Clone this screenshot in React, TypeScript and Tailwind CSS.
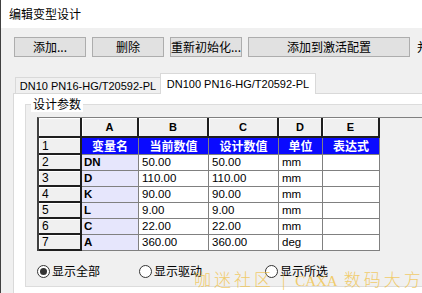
import React from "react";

const cjk = { fontFamily: '"Noto Sans CJK SC", "Liberation Sans", sans-serif' };
const latin = { fontFamily: '"Liberation Sans", "Noto Sans CJK SC", sans-serif' };

const rows = [
  { n: "2", name: "DN", cur: "50.00", des: "50.00", unit: "mm" },
  { n: "3", name: "D", cur: "110.00", des: "110.00", unit: "mm" },
  { n: "4", name: "K", cur: "90.00", des: "90.00", unit: "mm" },
  { n: "5", name: "L", cur: "9.00", des: "9.00", unit: "mm" },
  { n: "6", name: "C", cur: "22.00", des: "22.00", unit: "mm" },
  { n: "7", name: "A", cur: "360.00", des: "360.00", unit: "deg" },
];

const headCell =
  "flex items-center bg-[#f0f0f0] border-r-2 border-b-2 border-[#1e1e1e] shadow-[inset_1px_1px_0_#ffffff]";
const dataCell = "flex items-center bg-white border-r border-b border-[#808080] pl-[3px] text-[11.5px] text-black";

function Radio({ label, checked }: { label: string; checked?: boolean }) {
  return (
    <div className="flex items-center gap-[2px]">
      <span className="flex h-[13px] w-[13px] items-center justify-center rounded-full border border-[#333] bg-white">
        {checked && <span className="h-[7px] w-[7px] rounded-full bg-[#333]" />}
      </span>
      <span className="text-[12px] text-black" style={cjk}>
        {label}
      </span>
    </div>
  );
}

export default function App() {
  return (
    <div className="relative flex h-[293px] w-[422px] flex-col overflow-hidden border-l border-[#404040] bg-[#f0f0f0]">
      {/* title */}
      <div className="flex h-[28px] shrink-0 items-center bg-white pl-[8px] text-[12px] text-black" style={cjk}>
        编辑变型设计
      </div>

      {/* toolbar buttons */}
      <div className="mt-[9px] flex h-[20px] shrink-0 gap-[6px] pl-[13px] text-[12px] text-black" style={cjk}>
        <button className="w-[72px] shrink-0 border border-[#adadad] bg-[#e1e1e1]">添加...</button>
        <button className="w-[72px] shrink-0 border border-[#adadad] bg-[#e1e1e1]">删除</button>
        <button className="w-[72px] shrink-0 border border-[#adadad] bg-[#e1e1e1]">重新初始化...</button>
        <button className="w-[162px] shrink-0 border border-[#adadad] bg-[#e1e1e1]">添加到激活配置</button>
        <span className="shrink-0 pl-[1px] leading-[20px]">并</span>
      </div>

      {/* tabs */}
      <div className="mt-[16px] flex h-[20px] shrink-0 items-end pl-[14px] text-[11px] text-black" style={latin}>
        <div className="flex h-[16px] w-[145px] shrink-0 items-center justify-center border-t border-l border-[#d9d9d9] bg-[#f0f0f0] pt-[1px]">
          DN10 PN16-HG/T20592-PL
        </div>
        <div className="relative z-10 -mb-px flex h-[21px] w-[156px] shrink-0 items-start justify-center border border-b-0 border-[#d9d9d9] bg-white pt-[2px]">
          DN100 PN16-HG/T20592-PL
        </div>
      </div>

      {/* tab page */}
      <div className="ml-[12px] flex-1 border-t border-l border-[#d9d9d9] bg-white pl-[11px] pt-[10px]">
        <div className="relative h-[183px] w-[420px] border-t border-l border-b border-[#dcdcdc] bg-[#f0f0f0] pl-[11px] pt-[12px]">
          <span className="absolute -top-[9px] left-[5px] bg-white px-[2px] text-[12px] leading-[16px] text-black" style={cjk}>
            设计参数
          </span>

          {/* grid control */}
          <div className="h-[134px] border-t border-l-2 border-t-[#808080] border-l-[#404040] bg-[#f0f0f0]">
            <div className="grid w-max grid-cols-[43px_57px_70px_70px_44px_57px] grid-rows-[20px_17px_repeat(6,16px)]">
              <div className={headCell} />
              {["A", "B", "C", "D", "E"].map((c) => (
                <div key={c} className={`${headCell} justify-center text-[11px] font-bold text-black`} style={latin}>
                  {c}
                </div>
              ))}

              <div className={`${headCell} pl-[3px] text-[12px] text-black`} style={latin}>
                1
              </div>
              {["变量名", "当前数值", "设计数值", "单位", "表达式"].map((t) => (
                <div
                  key={t}
                  className="flex items-center justify-center border-r border-b border-[#808080] bg-[#0a0aff] text-[12px] font-bold text-white"
                  style={cjk}
                >
                  {t}
                </div>
              ))}

              {rows.map((r) => (
                <React.Fragment key={r.n}>
                  <div className={`${headCell} pl-[3px] text-[12px] text-black`} style={latin}>
                    {r.n}
                  </div>
                  <div
                    className="flex items-center border-r border-b border-[#808080] bg-[#e6e6fc] pl-[2px] text-[11.5px] font-bold text-black"
                    style={latin}
                  >
                    {r.name}
                  </div>
                  <div className={dataCell} style={latin}>
                    {r.cur}
                  </div>
                  <div className={dataCell} style={latin}>
                    {r.des}
                  </div>
                  <div className={dataCell} style={latin}>
                    {r.unit}
                  </div>
                  <div className={dataCell} />
                </React.Fragment>
              ))}
            </div>
          </div>

          {/* radios */}
          <div className="mt-[11px] flex h-[18px] items-center">
            <div className="w-[102px] shrink-0">
              <Radio label="显示全部" checked />
            </div>
            <div className="w-[126px] shrink-0">
              <Radio label="显示驱动" />
            </div>
            <Radio label="显示所选" />
          </div>
        </div>
      </div>

      {/* watermark */}
      <div
        className="pointer-events-none absolute left-[193px] top-[268px] flex items-center whitespace-nowrap font-light text-[#f0c040] opacity-75"
        style={{ fontFamily: '"Liberation Serif", "Noto Sans CJK SC", serif' }}
      >
        <span className="text-[17px] tracking-[3px]">咖迷社区</span>
        <span className="ml-[8px] text-[16px]">|</span>
        <span className="ml-[10px] text-[15px] tracking-[0px]">CAXA</span>
        <span className="ml-[6px] text-[17px] tracking-[3px]">数码大方</span>
      </div>
    </div>
  );
}
